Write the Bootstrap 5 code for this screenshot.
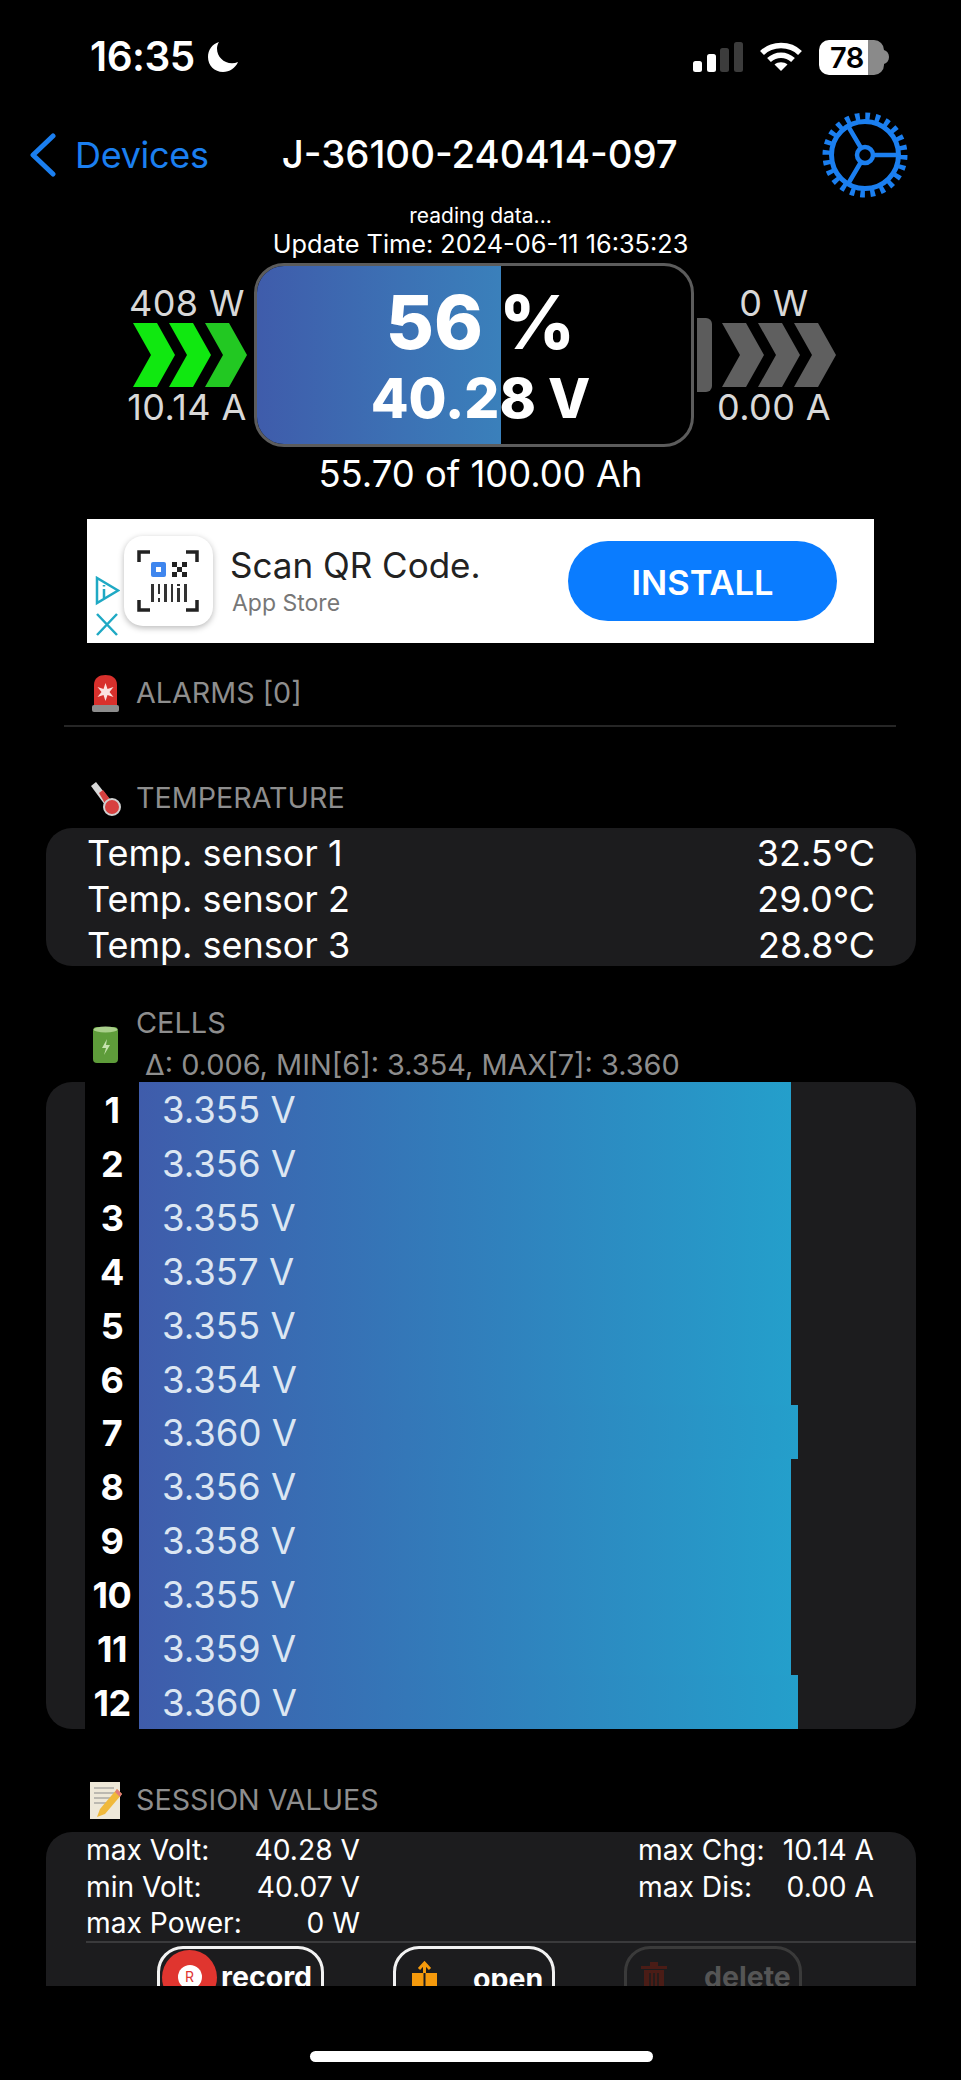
<!DOCTYPE html>
<html lang="en">
<head>
  <meta charset="UTF-8">
  <meta name="viewport" content="width=device-width, initial-scale=1">
  <title>J-36100-240414-097</title>
  <link href="https://cdn.jsdelivr.net/npm/bootstrap@5.3.0/dist/css/bootstrap.min.css" rel="stylesheet">
  <style>
    body { background: #000; color: #fff; font-family: Inter, "Liberation Sans", sans-serif; }
    .phone { width: 961px; height: 2080px; overflow: hidden; background: #000; }

    .status-row { height: 114px; padding: 0 71px 0 90px; }
    .status-time { font-size: 40.5px; font-weight: 600; letter-spacing: -.5px; line-height: 1; }
    .batt-pill { width: 65px; height: 35px; border-radius: 10px; font-size: 29px; font-weight: 600; color: #000;
      background: linear-gradient(90deg, #fff 75%, #8a8a8a 75%); line-height: 35px; padding-left: 11px; letter-spacing: -.5px; }

    .nav-row { height: 82px; padding: 0 0 0 29px; }
    .back-link { color: #1b7ff0; font-size: 36px; letter-spacing: -.3px; }
    .dev-title { font-size: 38.4px; font-weight: 500; width: 394px; margin-left: 73px; white-space: nowrap; }

    .read-line { font-size: 21px; line-height: 26px; margin-top: 7px; margin-bottom: 0; }
    .update-line { font-size: 25.3px; line-height: 30px; margin-bottom: 0; }

    .hero { margin-top: 4px; height: 184px; padding-left: 125px; }
    .flow-col { width: 124px; padding-top: 20px; margin-right: 5px; flex: none; }
    .flow-col.out-col { width: 118px; margin: 0; }
    .flow-txt { font-size: 36px; line-height: 40px; color: #d8d8d8; text-align: center; white-space: nowrap; letter-spacing: .4px; }
    .batt-body { width: 440px; height: 184px; border: 3px solid #5c5c5c; border-radius: 30px; overflow: hidden; padding: 16px 0 0 13px; flex: none; }
    .batt-fill { left: 0; top: 0; bottom: 0; width: 244px; background: linear-gradient(90deg, #3f5cab, #3a80bb); }
    .batt-pct { font-size: 74px; line-height: 80px; font-weight: 800; }
    .batt-volt { font-size: 55px; line-height: 60px; font-weight: 800; margin-top: 6px; }
    .batt-nub { width: 15px; height: 74px; background: #5c5c5c; border-radius: 0 6px 6px 0; margin: 55px 3px 0 3px; flex: none; }
    .ah-line { font-size: 36.4px; line-height: 40px; margin: 7px 0 0; }

    .ad-box { width: 787px; height: 124px; margin: 25px 0 0 87px; background: #fff; padding-left: 37px; }
    .ad-icon { width: 89px; height: 90px; border-radius: 19px; background: #fff; box-shadow: 0 2px 6px rgba(0,0,0,.28); flex: none; }
    .ad-copy { margin-top: -2px; }
    .ad-title { font-size: 35px; line-height: 42px; color: #222; margin-left: 17px; }
    .ad-sub { font-size: 23px; line-height: 28px; color: #777; margin-left: 19px; margin-top: 3px; }
    .ad-btn { width: 269px; height: 80px; border-radius: 40px; background: #0a7cff; border: 0; color: #fff; font-size: 34.5px; font-weight: 600; margin-left: auto; margin-right: 37px; padding-top: 4px; }
    .ad-choice { left: 7px; top: 57px; }

    .sec-head { height: 40px; margin-left: 91px; color: #8e8e8e; font-size: 28.7px; line-height: 40px; }
    .sec-head svg { flex: none; }
    .sec-txt { margin-left: 16px; }
    .rule-line { height: 2px; background: #262626; margin: 12px 65px 0 64px; }

    .group-card { width: 870px; margin-left: 46px; background: #1c1c1e; border-radius: 26px; }
    .temp-card { height: 138px; margin-top: 10px; padding: 2px 41px; font-size: 36px; line-height: 46px; }

    .cell-head { margin: 39px 0 0 93px; height: 77px; color: #8e8e8e; font-size: 28.9px; }
    .cell-title { line-height: 36px; margin-left: 18px; }
    .cell-stat { line-height: 34px; margin: 7px 0 0 27px; white-space: nowrap; }
    .cell-card { height: 647px; overflow: hidden; }
    .cell-row { height: 53.92px; padding-left: 39px; }
    .cell-num { width: 54px; background: #000; text-align: center; font-size: 36px; font-weight: 700; line-height: 56px; letter-spacing: -.5px; flex: none; }
    .cell-bar { background: linear-gradient(90deg, #3f5cab, #249fcb); padding-left: 23px; font-size: 36.5px; line-height: 56px; color: #dce6f2; }

    .sess-card { height: 154px; margin-top: 12px; overflow: hidden; border-radius: 26px 26px 0 0; font-size: 28.2px; line-height: 36.5px; padding-left: 40px; }
    .sess-left { width: 274px; }
    .sess-right { width: 236px; margin-left: 278px; }
    .sess-rule { height: 2px; background: #3a3a3c; margin-top: -1px; }
    .sess-actions { padding-left: 71px; gap: 69px; margin-top: 3px; }
    .sess-btn { height: 70px; border: 3px solid #f2f2f2; border-radius: 26px; color: #fff; font-size: 28.5px; font-weight: 700; padding: 1px 0 0 2px; text-align: left; flex: none; line-height: 1; }
    .sess-btn.off { border-color: #3a3a3a; color: #555; }
    .rec-dot { width: 55px; height: 55px; border-radius: 50%; background: #e0352f; flex: none; }
    .rec-inner { width: 24px; height: 24px; border-radius: 50%; background: #fff; color: #e0352f; font-size: 14px; line-height: 24px; text-align: center; font-weight: 400; }
    .home-bar { width: 343px; height: 11px; border-radius: 6px; background: #fff; margin: 65px 0 0 310px; }
  </style>
</head>
<body>
<div class="phone d-flex flex-column">

  <!-- status bar -->
  <div class="status-row d-flex align-items-center">
    <span class="status-time">16:35</span>
    <svg style="margin-left:12px" width="32" height="32" viewBox="0 0 32 32"><path d="M12 1C5 3 1 9 1 16c0 8.500 6.500 15 15 15 6.500 0 12.500-4 15-10-2 .800-4 1.200-6 1.200C16.500 22.200 10 15.500 10 7.500 10 5.500 10.700 3 12 1z" fill="#fff"/></svg>
    <div class="ms-auto d-flex align-items-center">
      <svg width="50" height="30" viewBox="0 0 50 30">
        <rect x="0" y="19" width="9" height="11" rx="2.500" fill="#fff"/>
        <rect x="14" y="12" width="9" height="18" rx="2.500" fill="#fff"/>
        <rect x="27" y="6" width="9" height="24" rx="2.500" fill="#3c3c3c"/>
        <rect x="41" y="0" width="9" height="30" rx="2.500" fill="#3c3c3c"/>
      </svg>
      <svg class="ms-3" width="44" height="30" viewBox="0 0 44 30" fill="none" stroke="#fff" stroke-width="5.500">
        <path d="M3 11C13 1 31 1 41 11"/>
        <path d="M10 18c7-6.500 17-6.500 24 0"/>
        <path d="M22 29l-6.500-6.500c3.500-3 9.500-3 13 0z" fill="#fff" stroke="none"/>
      </svg>
      <div class="batt-pill ms-3">78</div>
      <svg width="6" height="14" viewBox="0 0 6 14"><path d="M0 0c3 1 5 3.500 5 7s-2 6-5 7z" fill="#8a8a8a"/></svg>
    </div>
  </div>

  <!-- nav bar -->
  <div class="nav-row d-flex align-items-center">
    <svg width="27" height="44" viewBox="0 0 27 44" fill="none" stroke="#1b7ff0" stroke-width="5" stroke-linecap="round" stroke-linejoin="round"><path d="M24 3L4 22l20 19"/></svg>
    <a class="back-link text-decoration-none" style="margin-left:19px" href="#">Devices</a>
    <div class="dev-title text-center">J-36100-240414-097</div>
    <svg class="ms-auto" style="margin-right:53px" width="86" height="86" viewBox="0 0 86 86" fill="none" stroke="#1b7ff0">
      <circle cx="43" cy="43" r="38.500" stroke-width="8" stroke-dasharray="4.600 5.480"/>
      <circle cx="43" cy="43" r="33.500" stroke-width="5"/>
      <circle cx="43" cy="43" r="8" stroke-width="4.500"/>
      <path d="M51 43h25M39 36L26 14M39 50L26 72" stroke-width="4.500"/>
    </svg>
  </div>

  <p class="read-line text-center">reading data...</p>
  <p class="update-line text-center">Update Time: 2024-06-11 16:35:23</p>

  <!-- battery -->
  <div class="hero d-flex">
    <div class="flow-col">
      <div class="flow-txt">408 W</div>
      <svg class="d-block ms-2" width="115" height="64" viewBox="0 0 115 64">
        <path d="M0 0h24l18 32-18 32H0l18-32z" fill="#10e810"/>
        <path d="M36 0h24l18 32-18 32H36l18-32z" fill="#10e810"/>
        <path d="M72 0h24l18 32-18 32H72l18-32z" fill="#22c822"/>
      </svg>
      <div class="flow-txt">10.14 A</div>
    </div>
    <div class="batt-body position-relative text-center">
      <div class="batt-fill position-absolute"></div>
      <div class="batt-pct position-relative">56 %</div>
      <div class="batt-volt position-relative">40.28 V</div>
    </div>
    <div class="batt-nub"></div>
    <div class="flow-col out-col">
      <div class="flow-txt">0 W</div>
      <svg class="d-block" style="margin-left:7px" width="115" height="64" viewBox="0 0 115 64">
        <path d="M0 0h24l18 32-18 32H0l18-32z" fill="#5f5f5f"/>
        <path d="M36 0h24l18 32-18 32H36l18-32z" fill="#5f5f5f"/>
        <path d="M72 0h24l18 32-18 32H72l18-32z" fill="#5f5f5f"/>
      </svg>
      <div class="flow-txt">0.00 A</div>
    </div>
  </div>
  <p class="ah-line text-center">55.70 of 100.00 Ah</p>

  <!-- ad -->
  <div class="ad-box d-flex align-items-center position-relative">
    <svg class="ad-choice position-absolute" width="26" height="60" viewBox="0 0 26 60" fill="none" stroke="#1fa9c4" stroke-width="2.500">
      <path d="M3 2v25l21-12.500z"/>
      <path d="M10 13v9M10 9v1.500"/>
      <path d="M3 38l20 21M23 38L3 59"/>
    </svg>
    <div class="ad-icon position-relative">
      <svg class="d-block" width="89" height="90" viewBox="0 0 89 90">
        <path d="M15 26V16h11M62 16h11v10M15 64v10h11M62 74h11V64" fill="none" stroke="#222" stroke-width="3.500"/>
        <rect x="27" y="26" width="15" height="15" rx="2" fill="#3f86ee"/>
        <rect x="32" y="31" width="5" height="5" fill="#fff"/>
        <path d="M48 26h5v5h-5zM58 26h5v5h-5zM53 31h5v5h-5zM48 36h5v5h-5zM58 36h5v5h-5z" fill="#222"/>
        <path d="M27 48h3v18h-3zM34 48h2v10h-2zM34 62h2v4h-2zM40 48h3v18h-3zM47 48h2v18h-2zM53 52h3v14h-3zM53 48h3v2h-3zM60 48h3v18h-3z" fill="#333"/>
      </svg>
    </div>
    <div class="ad-copy">
      <div class="ad-title">Scan QR Code.</div>
      <div class="ad-sub">App Store</div>
    </div>
    <button class="ad-btn" type="button">INSTALL</button>
  </div>

  <!-- alarms -->
  <div class="sec-head d-flex align-items-center" style="margin-top:30px">
    <svg width="29" height="37" viewBox="0 0 29 37">
      <rect x="1" y="30" width="27" height="7" rx="2" fill="#8d8d8d"/>
      <path d="M3 30V10C3 3 8 0 14.500 0S26 3 26 10v20z" fill="#d8302c"/>
      <path d="M14.500 8l2 6 6-2-4 5 4 5-6-2-2 6-2-6-6 2 4-5-4-5 6 2z" fill="#fbe3e0"/>
    </svg>
    <span class="sec-txt">ALARMS [0]</span>
  </div>
  <div class="rule-line"></div>

  <!-- temperature -->
  <div class="sec-head d-flex align-items-center" style="margin-top:51px">
    <svg style="margin-left:-3px" width="34" height="36" viewBox="0 0 34 36">
      <path d="M3 6l5-4 15 19-6 4z" fill="#d9d9d9"/>
      <path d="M11 13l4-3 10 13-6 4z" fill="#d8403f"/>
      <circle cx="24" cy="27" r="8" fill="#d8403f" stroke="#d0d0d0" stroke-width="2"/>
    </svg>
    <span class="sec-txt" style="margin-left:14px">TEMPERATURE</span>
  </div>
  <div class="group-card temp-card">
    <div class="d-flex justify-content-between"><span>Temp. sensor 1</span><span>32.5°C</span></div>
    <div class="d-flex justify-content-between"><span>Temp. sensor 2</span><span>29.0°C</span></div>
    <div class="d-flex justify-content-between"><span>Temp. sensor 3</span><span>28.8°C</span></div>
  </div>

  <!-- cells -->
  <div class="cell-head d-flex">
    <svg style="margin-top:21px" class="flex-shrink-0" width="25" height="37" viewBox="0 0 25 37">
      <rect x="0" y="1" width="25" height="36" rx="4" fill="#5e9c3a"/>
      <ellipse cx="12.500" cy="3.500" rx="12" ry="3" fill="#a9cf8b"/>
      <path d="M14 13l-5 9h4l-2 7 6-10h-4z" fill="#c6e2ae"/>
    </svg>
    <div>
      <div class="cell-title">CELLS</div>
      <div class="cell-stat">Δ: 0.006, MIN[6]: 3.354, MAX[7]: 3.360</div>
    </div>
  </div>
  <div class="group-card cell-card">
    <div class="cell-row d-flex"><div class="cell-num">1</div><div class="cell-bar" style="width:652px">3.355 V</div></div>
    <div class="cell-row d-flex"><div class="cell-num">2</div><div class="cell-bar" style="width:652px">3.356 V</div></div>
    <div class="cell-row d-flex"><div class="cell-num">3</div><div class="cell-bar" style="width:652px">3.355 V</div></div>
    <div class="cell-row d-flex"><div class="cell-num">4</div><div class="cell-bar" style="width:652px">3.357 V</div></div>
    <div class="cell-row d-flex"><div class="cell-num">5</div><div class="cell-bar" style="width:652px">3.355 V</div></div>
    <div class="cell-row d-flex"><div class="cell-num">6</div><div class="cell-bar" style="width:652px">3.354 V</div></div>
    <div class="cell-row d-flex"><div class="cell-num">7</div><div class="cell-bar" style="width:659px">3.360 V</div></div>
    <div class="cell-row d-flex"><div class="cell-num">8</div><div class="cell-bar" style="width:652px">3.356 V</div></div>
    <div class="cell-row d-flex"><div class="cell-num">9</div><div class="cell-bar" style="width:652px">3.358 V</div></div>
    <div class="cell-row d-flex"><div class="cell-num">10</div><div class="cell-bar" style="width:652px">3.355 V</div></div>
    <div class="cell-row d-flex"><div class="cell-num">11</div><div class="cell-bar" style="width:652px">3.359 V</div></div>
    <div class="cell-row d-flex"><div class="cell-num">12</div><div class="cell-bar" style="width:659px">3.360 V</div></div>
  </div>

  <!-- session values -->
  <div class="sec-head d-flex align-items-center" style="margin-top:51px;margin-left:90px">
    <svg width="32" height="37" viewBox="0 0 32 37">
      <rect x="0" y="0" width="30" height="37" fill="#eee8d8"/>
      <path d="M4 6h20M4 11h22M4 16h16M4 21h12" stroke="#8a8a8a" stroke-width="1.200"/>
      <path d="M27 7l5 5-17 20-8 3 3-8z" fill="#f0b93a"/>
      <path d="M27 7l5 5-2 3-5-5z" fill="#e07a7a"/>
    </svg>
    <span class="sec-txt" style="margin-left:14px">SESSION VALUES</span>
  </div>
  <div class="group-card sess-card">
    <div class="d-flex">
      <div class="sess-left">
        <div class="d-flex justify-content-between"><span>max Volt:</span><span>40.28 V</span></div>
        <div class="d-flex justify-content-between"><span>min Volt:</span><span>40.07 V</span></div>
        <div class="d-flex justify-content-between"><span>max Power:</span><span>0 W</span></div>
      </div>
      <div class="sess-right">
        <div class="d-flex justify-content-between"><span>max Chg:</span><span>10.14 A</span></div>
        <div class="d-flex justify-content-between"><span>max Dis:</span><span>0.00 A</span></div>
      </div>
    </div>
    <div class="sess-rule"></div>
    <div class="sess-actions d-flex">
      <button class="btn sess-btn d-flex" style="width:167px" type="button">
        <span class="rec-dot d-flex align-items-center justify-content-center"><span class="rec-inner">R</span></span>
        <span style="margin:13px 0 0 4px">record</span>
      </button>
      <button class="btn sess-btn d-flex" style="width:162px" type="button">
        <svg class="flex-shrink-0" style="margin:11px 0 0 13px" width="27" height="40" viewBox="0 0 27 40">
          <path d="M1 12h25v28H1z" fill="#f59a0c"/>
          <path d="M13.500 24V3M8 8l5.500-6L19 8" fill="none" stroke="#f59a0c" stroke-width="3"/>
          <path d="M13.500 12v14" stroke="#1c1c1e" stroke-width="2"/>
        </svg>
        <span style="margin:15px 0 0 35px">open</span>
      </button>
      <button class="btn sess-btn off d-flex" style="width:178px" type="button">
        <svg class="flex-shrink-0" style="margin:11px 0 0 12px" width="26" height="40" viewBox="0 0 26 40">
          <path d="M0 5h26v3H0zM9 1h8v4H9z" fill="#4a1c16"/>
          <path d="M3 9h20v31H3z" fill="#4a1c16"/>
          <path d="M9 12v26M13 12v26M17 12v26" stroke="#1c1c1e" stroke-width="1.500"/>
        </svg>
        <span style="margin:13px 0 0 37px">delete</span>
      </button>
    </div>
  </div>

  <div class="home-bar"></div>
</div>
<script src="https://cdn.jsdelivr.net/npm/bootstrap@5.3.0/dist/js/bootstrap.bundle.min.js"></script>
</body>
</html>
